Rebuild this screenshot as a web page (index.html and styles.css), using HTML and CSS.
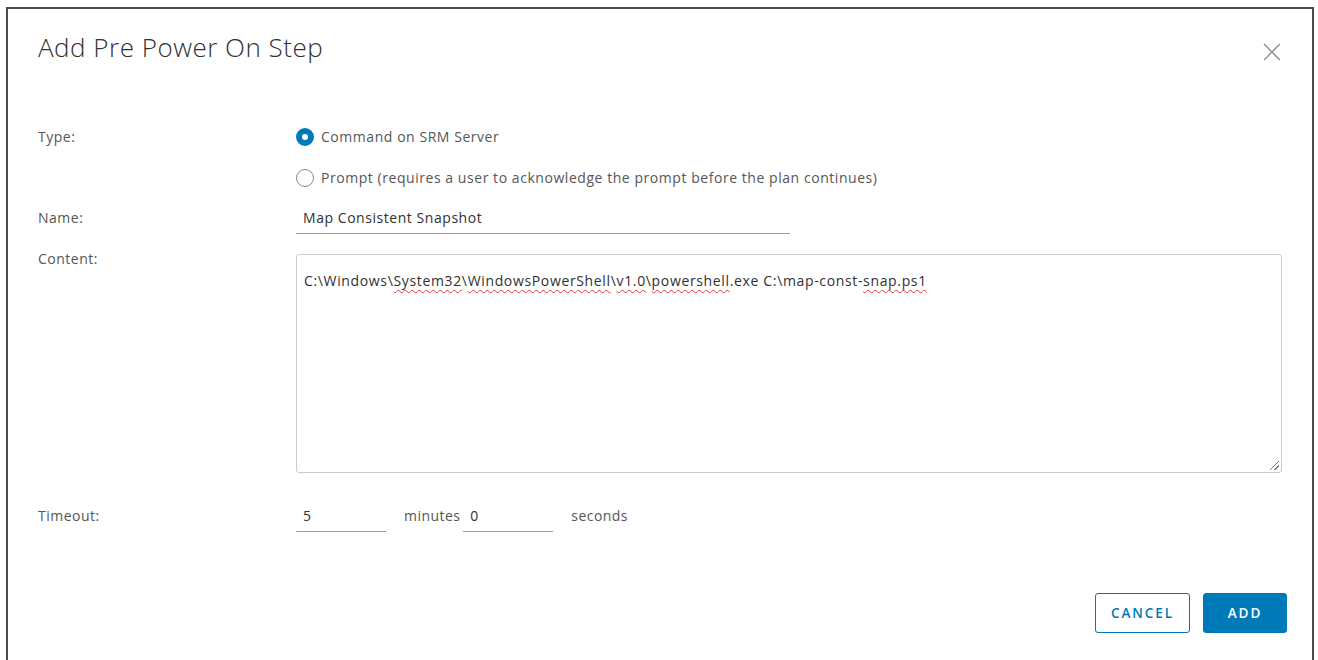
FILE: index.html
```html
<!DOCTYPE html>
<html lang="en">
<head>
<meta charset="utf-8">
<title>Add Pre Power On Step</title>
<link rel="stylesheet" href="styles.css">
</head>
<body>
<div class="modal">
  <div class="modal-header">
    <h3 class="modal-title">Add Pre Power On Step</h3>
    <button class="close" aria-label="Close">
      <svg width="18" height="18" viewBox="0 0 18 18"><path d="M1 1 L17 17 M17 1 L1 17" stroke="#8c8c8c" stroke-width="1.4" fill="none"/></svg>
    </button>
  </div>
  <form class="modal-body">
    <div class="row row-type">
      <label class="label">Type:</label>
      <div class="radios">
        <label class="radio"><span class="dot checked"></span>Command on SRM Server</label>
        <label class="radio"><span class="dot"></span>Prompt (requires a user to acknowledge the prompt before the plan continues)</label>
      </div>
    </div>
    <div class="row row-name">
      <label class="label">Name:</label>
      <div class="input name-input">Map Consistent Snapshot</div>
    </div>
    <div class="row row-content">
      <label class="label">Content:</label>
      <div class="textarea">C:\Windows\<span class="sp">System32</span>\<span class="sp">WindowsPowerShell</span>\<span class="sp">v1.0</span>\<span class="sp">powershell</span>.exe C:\map-const-<span class="sp">snap.ps1</span><span class="grip"></span></div>
    </div>
    <div class="row row-timeout">
      <label class="label">Timeout:</label>
      <div class="timeout">
        <div class="input num">5</div>
        <span class="unit">minutes</span>
        <div class="input num">0</div>
        <span class="unit">seconds</span>
      </div>
    </div>
  </form>
  <div class="modal-footer">
    <button class="btn btn-outline">CANCEL</button>
    <button class="btn btn-primary">ADD</button>
  </div>
</div>
</body>
</html>
```
FILE: styles.css
```css
html, body {
  margin: 0;
  background: #fff;
}
body {
  padding: 7px 4px 0 6px;
  font-family: "Open Sans", "Liberation Sans", sans-serif;
  color: #565656;
}
.modal {
  box-sizing: border-box;
  width: 1308px;
  height: 660px;
  border: 2px solid #4a4a4a;
  border-bottom: none;
  background: #fff;
  padding: 0 30px 0 30px;
  display: flex;
  flex-direction: column;
}
.modal-header {
  display: flex;
  justify-content: space-between;
  align-items: flex-start;
  padding-top: 21px;
  height: 72px;
  box-sizing: border-box;
}
.modal-title {
  margin: 0;
  font-weight: 300;
  font-size: 26px;
  line-height: 34px;
  color: #313131;
  letter-spacing: 0.5px;
}
.close {
  border: 0;
  background: none;
  padding: 0;
  margin: 13px 1px 0 0;
  width: 18px;
  height: 18px;
}
.modal-body {
  display: flex;
  flex-direction: column;
  margin-top: 47px;
}
.row {
  display: flex;
  align-items: flex-start;
}
.label {
  width: 258px;
  flex: none;
  font-size: 14px;
  line-height: 18px;
  color: #565656;
  letter-spacing: 0.5px;
}
.radios {
  display: flex;
  flex-direction: column;
  gap: 23px;
}
.radio {
  display: flex;
  align-items: center;
  font-size: 14px;
  line-height: 18px;
  color: #565656;
  letter-spacing: 0.55px;
}
.dot {
  box-sizing: border-box;
  width: 18px;
  height: 18px;
  border-radius: 50%;
  border: 1px solid #8c8c8c;
  margin-right: 7px;
  flex: none;
}
.dot.checked {
  border: 6px solid #0079b8;
  background: #fff;
}
.row-name {
  margin-top: 22px;
}
.input {
  box-sizing: border-box;
  border-bottom: 1px solid #9a9a9a;
  font-size: 14px;
  line-height: 18px;
  height: 25px;
  padding: 0 7px;
  color: #313131;
  letter-spacing: 0.55px;
}
.name-input {
  width: 494px;
}
.row-content {
  margin-top: 16px;
}
.textarea {
  position: relative;
  box-sizing: border-box;
  margin-top: 4px;
  width: 986px;
  height: 219px;
  border: 1px solid #cccccc;
  border-radius: 3px;
  padding: 17px 7px;
  font-size: 14px;
  line-height: 18px;
  color: #313131;
  letter-spacing: 0.65px;
}
.sp {
  text-decoration: underline wavy #e0393e;
  text-decoration-thickness: 1px;
  text-underline-offset: 3px;
}
.grip {
  position: absolute;
  right: 2px;
  bottom: 2px;
  width: 9px;
  height: 9px;
  background:
    linear-gradient(135deg, transparent 45%, #7a7a7a 45%, #7a7a7a 53%, transparent 53%, transparent 72%, #7a7a7a 72%, #7a7a7a 80%, transparent 80%);
}
.row-timeout {
  margin-top: 34px;
}
.timeout {
  display: flex;
  align-items: flex-start;
}
.num {
  width: 90px;
}
.unit {
  font-size: 14px;
  line-height: 18px;
  color: #565656;
  letter-spacing: 0.45px;
  padding: 0 3px 0 18px;
}
.modal-footer {
  margin-top: auto;
  margin-bottom: 34px;
  margin-right: -5px;
  display: flex;
  justify-content: flex-end;
  gap: 13px;
}
.btn {
  box-sizing: border-box;
  height: 40px;
  border-radius: 3px;
  font-family: "Open Sans", "Liberation Sans", sans-serif;
  font-size: 13.5px;
  font-weight: 600;
  letter-spacing: 1.9px;
  padding: 0 10px;
}
.btn-outline {
  width: 95px;
  background: #fff;
  color: #0079b8;
  border: 1px solid #0079b8;
}
.btn-primary {
  width: 84px;
  background: #0079b8;
  color: #fff;
  border: 1px solid #0079b8;
}
```
